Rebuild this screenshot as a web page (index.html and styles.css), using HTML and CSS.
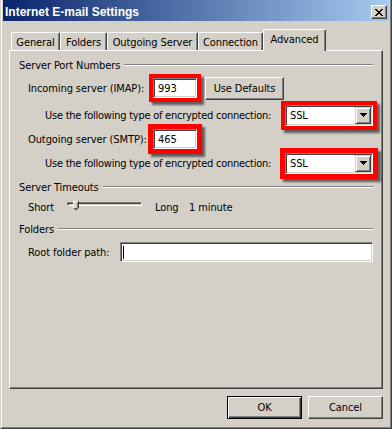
FILE: index.html
```html
<!DOCTYPE html>
<html lang="en">
<head>
    <meta charset="UTF-8">
    <meta name="viewport" content="width=device-width, initial-scale=1.0">
    <title>Internet E-mail Settings</title>
    <link rel="stylesheet" href="styles.css">
</head>
<body>
    <div class="window">
        <div class="frame">
            <div class="titlebar">
                <span class="title">Internet E-mail Settings</span>
                <div class="close-btn">
                    <svg width="8" height="7" viewBox="0 0 8 7" shape-rendering="crispEdges">
                        <path d="M0 0h2v1H0zM6 0h2v1H6zM1 1h2v1H1zM5 1h2v1H5zM2 2h4v1H2zM3 3h2v1H3zM2 4h4v1H2zM1 5h2v1H1zM5 5h2v1H5zM0 6h2v1H0zM6 6h2v1H6z" fill="#000"/>
                    </svg>
                </div>
            </div>

            <div class="tabs">
                <div class="tab tab-general">General</div>
                <div class="tab tab-folders">Folders</div>
                <div class="tab tab-outgoing">Outgoing Server</div>
                <div class="tab tab-connection">Connection</div>
                <div class="tab tab-advanced active">Advanced</div>
            </div>

            <div class="panel">
                <div class="group-head">
                    <span>Server Port Numbers</span>
                    <div class="etch"></div>
                </div>

                <div class="row row-first">
                    <span class="lbl lbl-port">Incoming server (IMAP):</span>
                    <span class="mark"><span class="field field-port">993</span></span>
                    <div class="btn btn-defaults">Use Defaults</div>
                </div>
                <div class="row">
                    <span class="lbl lbl-sub">Use the following type of encrypted connection:</span>
                    <span class="mark mark-combo">
                        <span class="combo">
                            <span class="combo-text">SSL</span>
                            <span class="combo-btn">
                                <svg width="7" height="4" viewBox="0 0 7 4" shape-rendering="crispEdges"><path d="M0 0h7v1H0zM1 1h5v1H1zM2 2h3v1H2zM3 3h1v1H3z" fill="#000"/></svg>
                            </span>
                        </span>
                    </span>
                </div>
                <div class="row">
                    <span class="lbl lbl-port">Outgoing server (SMTP):</span>
                    <span class="mark mark-wide"><span class="field field-port">465</span></span>
                </div>
                <div class="row">
                    <span class="lbl lbl-sub">Use the following type of encrypted connection:</span>
                    <span class="mark mark-combo mark-wide">
                        <span class="combo">
                            <span class="combo-text">SSL</span>
                            <span class="combo-btn">
                                <svg width="7" height="4" viewBox="0 0 7 4" shape-rendering="crispEdges"><path d="M0 0h7v1H0zM1 1h5v1H1zM2 2h3v1H2zM3 3h1v1H3z" fill="#000"/></svg>
                            </span>
                        </span>
                    </span>
                </div>

                <div class="group-head group-timeouts">
                    <span>Server Timeouts</span>
                    <div class="etch"></div>
                </div>
                <div class="row row-slider">
                    <span class="lbl lbl-short">Short</span>
                    <div class="slider">
                        <div class="track"></div>
                        <svg class="thumb" width="6" height="10" viewBox="0 0 6 10" shape-rendering="crispEdges">
                            <path d="M0 0h5v7H0z" fill="#d4d0c8"/>
                            <path d="M0 0h5v1H0zM0 0h1v7H0z" fill="#fff"/>
                            <path d="M5 0h1v7H5zM1 7h1v1H1zM4 7h1v1H4zM2 8h2v1H2z" fill="#404040"/>
                            <path d="M4 1h1v6H4zM2 7h2v1H2z" fill="#808080"/>
                        </svg>
                    </div>
                    <span class="lbl lbl-long">Long</span>
                    <span class="lbl">1 minute</span>
                </div>

                <div class="group-head group-folders">
                    <span>Folders</span>
                    <div class="etch"></div>
                </div>
                <div class="row row-root">
                    <span class="lbl lbl-root">Root folder path:</span>
                    <span class="field field-root"><span class="caret"></span></span>
                </div>
            </div>

            <div class="actions">
                <div class="btn btn-default">OK</div>
                <div class="btn">Cancel</div>
            </div>
        </div>
    </div>
</body>
</html>
```

FILE: styles.css
```css
* {
    box-sizing: border-box;
}
body {
    margin: 0;
    font-family: "DejaVu Sans Condensed", "Liberation Sans", sans-serif;
    font-size: 11px;
    letter-spacing: -0.1px;
    color: #000;
    background: #d4d0c8;
}
.window {
    width: 392px;
    height: 429px;
    background: #d4d0c8;
    border-style: solid;
    border-width: 0 1px 1px 1px;
    border-color: #404040 #404040 #404040 #d4d0c8;
}
.frame {
    height: 100%;
    display: flex;
    flex-direction: column;
    padding: 0 1px 1px 1px;
    border-style: solid;
    border-width: 0 1px 1px 1px;
    border-color: #808080 #808080 #808080 #fff;
}

/* title bar */
.titlebar {
    height: 21px;
    flex: none;
    display: flex;
    align-items: center;
    justify-content: space-between;
    padding: 3px 2px 0 2px;
    background: linear-gradient(to right, #0a246a, #a6caf0);
}
.title {
    font-family: "Liberation Sans", sans-serif;
    font-weight: bold;
    font-size: 12px;
    letter-spacing: 0;
    color: #fff;
}
.close-btn {
    width: 16px;
    height: 14px;
    display: flex;
    align-items: center;
    justify-content: center;
    background: #d4d0c8;
    border: 1px solid;
    border-color: #fff #404040 #404040 #fff;
    box-shadow: inset -1px -1px #808080;
}

/* tabs */
.tabs {
    height: 21px;
    flex: none;
    margin: 8px 0 0 8px;
    display: flex;
    align-items: flex-end;
}
.tab {
    height: 18px;
    display: flex;
    align-items: center;
    justify-content: center;
    padding-top: 1px;
    border-top: 1px solid #fff;
    border-left: 1px solid #fff;
    border-right: 1px solid #404040;
    border-radius: 2px 2px 0 0;
    box-shadow: inset -1px 0 #808080;
}
.tab-general { width: 49px; }
.tab-folders { width: 47px; }
.tab-outgoing { width: 91px; }
.tab-connection { width: 65px; }
.tab-advanced { width: 63px; }
.tab.active {
    height: 22px;
    margin-bottom: -1px;
    padding-top: 0;
    padding-bottom: 3px;
    background: #d4d0c8;
    position: relative;
    z-index: 1;
}

/* panel */
.panel {
    height: 339px;
    flex: none;
    margin: 0 6px;
    padding: 7px 9px 0 9px;
    border: 1px solid;
    border-color: #fff #404040 #404040 #fff;
    box-shadow: inset -1px -1px #808080;
}
.group-head {
    height: 14px;
    display: flex;
    align-items: center;
    gap: 4px;
}
.etch {
    flex: 1;
    height: 2px;
    border-top: 1px solid #808080;
    border-bottom: 1px solid #fff;
}
.group-timeouts {
    margin-top: 5px;
}
.group-folders {
    margin-top: 7px;
}
.row {
    height: 24px;
    display: flex;
    align-items: center;
    padding-left: 9px;
}
.row-first {
    margin-top: 4px;
    margin-bottom: 3px;
}
.lbl {
    white-space: nowrap;
}
.lbl-port {
    width: 125px;
}
.lbl-sub {
    padding-left: 17px;
    letter-spacing: -0.25px;
}
.lbl-short {
    width: 39px;
}
.lbl-long {
    width: 34px;
    margin-left: 13px;
}
.lbl-root {
    width: 92px;
}

/* fields */
.field {
    display: flex;
    align-items: center;
    height: 20px;
    padding-left: 4px;
    background: #fff;
    border: 1px solid;
    border-color: #808080 #fff #fff #808080;
    box-shadow: inset 1px 1px #404040, inset -1px -1px #d4d0c8;
}
.field-port {
    width: 44px;
}
.field-root {
    flex: 1;
    padding-left: 2px;
}
.caret {
    width: 1px;
    height: 13px;
    background: #000;
}
.mark {
    display: inline-flex;
    box-shadow: 0 0 0 4px #f00, 3px 3px 2px 4px rgba(0, 0, 0, 0.55);
}
.mark-wide {
    box-shadow: 0 0 0 5px #f00, 3px 3px 2px 5px rgba(0, 0, 0, 0.55);
}
.mark-combo {
    margin-left: auto;
}
.combo {
    width: 88px;
    height: 21px;
    display: flex;
    align-items: center;
    background: #fff;
    padding: 2px;
    border: 1px solid;
    border-color: #808080 #fff #fff #808080;
    box-shadow: inset 1px 1px #404040, inset -1px -1px #d4d0c8;
}
.combo-text {
    flex: 1;
    padding-left: 2px;
}
.combo-btn {
    width: 16px;
    height: 17px;
    margin: -1px -1px -1px 0;
    display: flex;
    align-items: center;
    justify-content: center;
    background: #d4d0c8;
    border: 1px solid;
    border-color: #d4d0c8 #404040 #404040 #d4d0c8;
    box-shadow: inset 1px 1px #fff, inset -1px -1px #808080;
}

/* slider */
.row-slider {
    height: 16px;
    margin-top: 5px;
}
.slider {
    width: 75px;
    height: 16px;
    position: relative;
}
.track {
    margin-top: 3px;
    height: 4px;
    border: 1px solid;
    border-color: #808080 #fff #fff #808080;
    box-shadow: inset 1px 1px #404040, inset -1px -1px #d4d0c8;
}
.thumb {
    position: absolute;
    left: 6px;
    top: 2px;
}

.row-root {
    height: 20px;
    margin-top: 6px;
}

/* buttons */
.btn {
    display: flex;
    align-items: center;
    justify-content: center;
    height: 23px;
    background: #d4d0c8;
    border: 1px solid;
    border-color: #fff #404040 #404040 #fff;
    box-shadow: inset -1px -1px #808080;
}
.btn-defaults {
    width: 79px;
    margin-left: 8px;
}
.actions {
    display: flex;
    justify-content: flex-end;
    gap: 6px;
    margin: 7px 6px 0 0;
}
.actions .btn {
    width: 75px;
}
.btn-default {
    border-color: #000;
    box-shadow: inset 1px 1px #fff, inset -1px -1px #404040, inset -2px -2px #808080;
}
```
